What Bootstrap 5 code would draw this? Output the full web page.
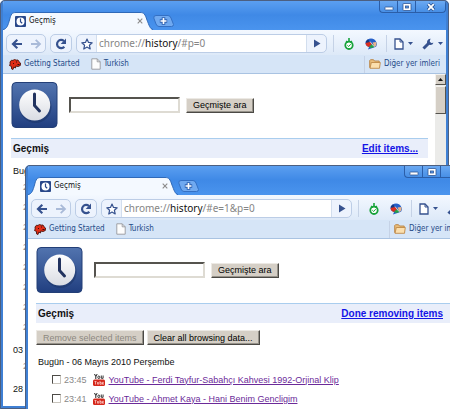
<!DOCTYPE html>
<html lang="tr">
<head>
<meta charset="utf-8">
<meta name="viewport" content="width=device-width, initial-scale=1">
<title>Geçmiş</title>
<link rel="stylesheet" href="https://cdn.jsdelivr.net/npm/bootstrap@5.3.0/dist/css/bootstrap.min.css">
<style>
body { font-family: "Liberation Sans", Arial, sans-serif; font-size: 9px; line-height: 12px; color: #111; background: #fff; }
button, input { font-family: inherit; }
.desktop { height: 100vh; }
.win { border: 3px solid #3f80d4; border-top-width: 0; outline: 1px solid #4c5f80; outline-offset: -1px; border-radius: 5px 5px 0 0; background: #fff; overflow: hidden; }
.win-back { inset: 0 1px 0 0; }
.win-front { top: 165px; left: 25px; width: calc(100% - 1px); height: 100%; }
.chrome-ui { font-family: "DejaVu Sans Condensed", "DejaVu Sans", sans-serif; font-size: 8px; line-height: 12px; }

.titlebar { height: 30px; background: linear-gradient(#5b9ff0, #3f89e6 14px, #4a94ee); border-top: 1px solid #4c5f80; }
.tab-item { width: 150px; height: 18px; }
.tab-shape { inset: 0; width: 100%; height: 100%; }
.tab-body { padding: 0 10px 0 12px; height: 18px; gap: 3px; color: #111; }
.tab-new { width: 21px; height: 12px; margin-bottom: 3px; }
.plain { border: 0; background: none; padding: 0; }
.caption { height: 12px; }
.caption button { width: 18px; border: 1px solid #2b5ea8; border-top: 0; border-right: 0; background: linear-gradient(#6ba9f2, #478fe6); padding: 0; }
.caption button:first-child { border-radius: 0 0 0 4px; }
.caption button:last-child { width: 31px; border-right: 1px solid #2b5ea8; border-radius: 0 0 4px 0; }

.toolbar { height: 25px; padding: 4px 3px 2px; background: linear-gradient(#f3f8ff, #dde9f8); }
.tool-group { border: 1px solid #bccde6; border-radius: 5px; background: #edf3fd; height: 19px; overflow: hidden; }
.tool-group button { width: 19px; }
.reload button { width: 20px; }
.omni { margin-left: 4px; }
.url { background: #fff; border-left: 1px solid #d2deee; border-right: 1px solid #d2deee; font-family: "Noto Sans", "Open Sans", sans-serif; font-size: 10px; line-height: 17px; color: #858585; padding-left: 2px; outline: 0; }
.url b { font-weight: 400; color: #111; }
.rule { width: 1px; height: 17px; background: #c5d2e6; }
.tools-rule { margin: 0 4px 0 6px; }
.ext { width: 22px; }
.drop { width: 24px; }

.bookmarks { height: 19px; padding: 0 6px; background: #d6e5f7; border-bottom: 1px solid #a9c3e2; }
.bookmarks a { color: #244a87; text-decoration: none; gap: 3px; }
.bm-second { margin-left: 11px; }

.page { padding: 8px 7px 0 8px; min-width: 0; }
.page-top { gap: 11px; }
.classic-input { width: 111px; height: 16px; border: 2px solid; border-color: #55534e #dedbd3 #dedbd3 #55534e; border-radius: 0; padding: 0 2px; background: #fff; font-size: 9px; }
.classic-btn { height: 15px; border: 1px solid; border-color: #ece9e4 #4b4945 #4b4945 #ece9e4; box-shadow: inset -1px -1px #96928a; background: #d5cfc6; color: #000; font-size: 9px; line-height: 12px; padding: 0 6px; white-space: nowrap; }
.classic-btn:disabled { color: #8d8981; }
.search { gap: 6px; }
.band { margin-top: 10px; height: 20px; background: #e9eefa; border-top: 1px solid #a9cdee; font-size: 10px; font-weight: 700; padding: 0 10px 0 2px; }
.band h1 { font-size: 10px; font-weight: 700; margin: 0; }
.band a { color: #1414e6; }
.day { font-size: 9px; line-height: 12px; margin: 0; padding-left: 2px; }
.back-day { padding-top: 7px; }
.back-list li { height: 20px; line-height: 20px; padding-left: 12px; }
.muted { color: #888; }
.entries { padding-top: 2px; }
.entries li { height: 19px; padding-left: 16px; gap: 3px; }
.entries svg { margin: 0 1px 0 3px; }
.entries a { color: #6b2a99; }
.entries input { appearance: none; width: 9px; height: 9px; margin: 0; border: 1px solid; border-color: #4d4b47 #c9c5bd #c9c5bd #4d4b47; background: #fff; }
.actions { gap: 3px; padding: 7px 0 11px; }

.scroller { width: 11px; background: #ebebe9; }
.scroller button { height: 11px; border: 1px solid; border-color: #f4f2ee #55534e #55534e #f4f2ee; background: #d5cfc6; padding: 0; }
.thumb { height: 28px; margin-top: 1px; border: 1px solid; border-color: #f4f2ee #55534e #55534e #f4f2ee; background: #d5cfc6; }
svg { display: block; flex: none; }
</style>
</head>
<body>
<svg width="0" height="0" class="position-absolute" aria-hidden="true">
  <defs>
    <linearGradient id="navy" x1="0" y1="0" x2="0" y2="1"><stop offset="0" stop-color="#5274af"/><stop offset="1" stop-color="#213f80"/></linearGradient>
    <linearGradient id="face" x1="0" y1="0" x2="0" y2="1"><stop offset="0" stop-color="#fff"/><stop offset="1" stop-color="#d9dce3"/></linearGradient>
  </defs>
  <symbol id="clock" viewBox="0 0 46 46"><rect x=".5" y=".5" width="45" height="45" rx="4" fill="url(#navy)" stroke="#233f77"/><circle cx="24" cy="25" r="16" fill="#1c3468" opacity=".55"/><circle cx="23.200" cy="23" r="15.500" fill="url(#face)"/><path d="M23 12v11.500l5 5.500" fill="none" stroke="#22335f" stroke-width="3" stroke-linecap="round" stroke-linejoin="round"/></symbol>
  <symbol id="clock-s" viewBox="0 0 11 11"><rect width="11" height="11" rx="1" fill="#29488a"/><circle cx="5.500" cy="5.500" r="4" fill="#fff"/><path d="M5.500 2.500v3.200l1.700 1.600" fill="none" stroke="#29488a" stroke-width="1.200"/></symbol>
  <symbol id="tab" viewBox="0 0 150 18"><path d="M0 18C4 17 5 13 6.500 8 8 2 9 .5 13 .5H137C141 .5 142 2 144 8 146 13 147 17 150 18Z" fill="#f4f9ff"/><path d="M0 17.500C4 17 5 13 6.500 8 8 2 9 .5 13 .5H137C141 .5 142 2 144 8 146 13 147 17 150 17.500" fill="none" stroke="#2f69b8"/></symbol>
  <symbol id="newtab" viewBox="0 0 21 12"><path d="M3 .5H15Q17 .5 18 3L20.500 9.500Q20.500 11.500 18.500 11.500H6Q4 11.500 3 9L.8 3Q.5 .5 3 .5Z" fill="#70a9f0" stroke="#3470c4"/><path d="M10.500 2.300v7.400M6.800 6h7.400" stroke="#2d5fae" stroke-width="3.600"/><path d="M10.500 3v6M7.500 6h6" stroke="#fff" stroke-width="1.700"/></symbol>
  <symbol id="x" viewBox="0 0 6 6"><path d="M.7.7l4.600 4.600M5.300.7L.7 5.300" stroke="#8b8b8b" stroke-width="1.100"/></symbol>
  <symbol id="min" viewBox="0 0 12 10"><rect x="2" y="5" width="8" height="3" rx=".5" fill="#fff" stroke="#2e5796" stroke-width=".8"/></symbol>
  <symbol id="max" viewBox="0 0 12 10"><rect x="2" y="1.500" width="8" height="7" rx=".5" fill="#fff" stroke="#2e5796" stroke-width=".8"/><rect x="4.500" y="4" width="3" height="2" fill="#5c9aec" stroke="#2e5796" stroke-width=".8"/></symbol>
  <symbol id="cls" viewBox="0 0 12 10"><path d="M3 2l6 6M9 2L3 8" stroke="#2e5796" stroke-width="3.400"/><path d="M3.200 2.200l5.600 5.600M8.800 2.200L3.200 7.800" stroke="#fff" stroke-width="1.800"/></symbol>
  <symbol id="back" viewBox="0 0 12 12"><path d="M11 6H2.500M6.300 1.800L2 6l4.300 4.200" fill="none" stroke="#36528f" stroke-width="2.200"/></symbol>
  <symbol id="fwd" viewBox="0 0 12 12"><path d="M1 6h8.500M5.700 1.800L10 6l-4.300 4.200" fill="none" stroke="#a9bad8" stroke-width="1.800"/></symbol>
  <symbol id="reload" viewBox="0 0 12 12"><path d="M9.300 8.700A4.100 4.100 0 1 1 8.900 3" fill="none" stroke="#36528f" stroke-width="2.200"/><path d="M11 .5V6H5.700Z" fill="#36528f"/></symbol>
  <symbol id="star" viewBox="0 0 12 12"><path d="M6 1l1.500 3.400 3.700.4-2.800 2.500.8 3.700L6 9.100 2.800 11l.8-3.700L.8 4.800l3.700-.4Z" fill="#fff" stroke="#36528f" stroke-width="1.200" stroke-linejoin="round"/></symbol>
  <symbol id="go" viewBox="0 0 8 9"><path d="M1 .5l6.500 4L1 8.500Z" fill="#36528f"/></symbol>
  <symbol id="timer" viewBox="0 0 12 12"><circle cx="6" cy="7.300" r="3.700" fill="#fff" stroke="#17a33a" stroke-width="1.800"/><path d="M6 0v4M3 3.200l2 1.200M9 3.200L7 4.400" stroke="#17a33a" stroke-width="1.600"/><path d="M4.300 7.200l1.400 1.300 2-2.300" fill="none" stroke="#17a33a"/></symbol>
  <symbol id="ball" viewBox="0 0 12 12"><path d="M.5 4Q2 .5 6 .5T11.500 4.500 9 9.500L3 11.500 4 9Q0 8 .5 4Z" fill="#245fc8"/><path d="M.8 3.500L3 1.200 5.500 4.500 2 6.500Z" fill="#17367c"/><path d="M.5 5L5 4l2.500 2L4 9Q1 8.500 .5 5Z" fill="#d92d20"/><path d="M4 9l3-3 2.500 2.500Q7 11 4 9Z" fill="#29a048"/><path d="M7.500 4.500l3.800-.5Q12 8 9.500 9Z" fill="#e8b48c"/><path d="M5 3.500l4 5" stroke="#fff" stroke-width=".7"/></symbol>
  <symbol id="sheet" viewBox="0 0 10 12"><path d="M1 1h5l3 3v7H1Z" fill="#fff" stroke="#36528f" stroke-width="1.300"/><path d="M6 1v3h3" fill="none" stroke="#36528f"/></symbol>
  <symbol id="wrench" viewBox="0 0 12 12"><path d="M1.500 10.500L7 5" stroke="#36528f" stroke-width="3"/><path d="M8.700.8A3.400 3.400 0 0 0 5 4.500 3.400 3.400 0 0 0 11.500 4.800L9.300 5 7.800 3.800 8 2Z" fill="#36528f"/></symbol>
  <symbol id="caret" viewBox="0 0 5 3"><path d="M0 0h5L2.500 3Z" fill="#36528f"/></symbol>
  <symbol id="dino" viewBox="0 0 12 11"><path d="M1 3L2.500 1.200 4 1.500 5.500.3 7 1.200 9 1 10 2.800 11.500 4 11.300 6.500 9 7.500 6.800 7 6.500 9 4.800 8 4 10.500 2.500 9.800 2.500 7.500.5 6.500 1.200 5Z" fill="#e02c16" stroke="#4b1109" stroke-width=".9"/><path d="M7 3h1M4 4l1 1M8.500 5.500h2" stroke="#3a0c07"/></symbol>
  <symbol id="doc" viewBox="0 0 10 12"><path d="M.8.8h5.400l3 3v7.400H.8Z" fill="#fdfdfd" stroke="#97999d" stroke-width=".9"/><path d="M6.200.8v3h3" fill="none" stroke="#97999d" stroke-width=".9"/></symbol>
  <symbol id="folder" viewBox="0 0 12 10"><path d="M.7 8.500V1.500L1.500.7h3l1 1.300h4.700v6.500Z" fill="#e9bd7c" stroke="#b9813f" stroke-width=".9"/><path d="M1 9.300L2.300 3.500h9L10.500 9.300Z" fill="#fbdfae" stroke="#c08a48" stroke-width=".9"/></symbol>
  <symbol id="tube" viewBox="0 0 12 12"><path d="M1.500 0l1.300 2.500V5M4.200 0L2.800 2.500" fill="none" stroke="#222"/><ellipse cx="5.800" cy="3.300" rx="1" ry="1.300" fill="none" stroke="#222" stroke-width=".9"/><path d="M8.300 1.500v2.800h1.800V1.500" fill="none" stroke="#222" stroke-width=".9"/><rect y="5.500" width="12" height="6.500" rx="1.500" fill="#d5281c"/><path d="M1.500 7.500h2M2.500 7.500v3M4.500 8v2.200h1.200V8M7 7v3.300h1.300V8.500H7M10.800 9.200H9.500V8.300h1.300M9.500 9v1.300h1.300" fill="none" stroke="#ffd9d4" stroke-width=".7"/></symbol>
</svg>

<main class="desktop position-relative overflow-hidden">

  <section class="win win-back position-absolute d-flex flex-column" aria-label="Geçmiş">
    <header class="chrome-ui">
      <div class="titlebar d-flex align-items-end">
        <div class="tab-item position-relative">
          <svg class="tab-shape position-absolute"><use href="#tab"/></svg>
          <div class="tab-body position-relative d-flex align-items-center">
            <svg width="11" height="11"><use href="#clock-s"/></svg><span>Geçmiş</span>
            <button class="plain ms-auto" aria-label="Kapat"><svg width="6" height="6"><use href="#x"/></svg></button>
          </div>
        </div>
        <button class="plain tab-new" aria-label="Yeni sekme"><svg width="21" height="12"><use href="#newtab"/></svg></button>
        <div class="caption d-flex ms-auto align-self-start">
          <button aria-label="Küçült"><svg class="mx-auto" width="12" height="10"><use href="#min"/></svg></button>
          <button aria-label="Büyüt"><svg class="mx-auto" width="12" height="10"><use href="#max"/></svg></button>
          <button aria-label="Kapat"><svg class="mx-auto" width="12" height="10"><use href="#cls"/></svg></button>
        </div>
      </div>
      <nav class="toolbar d-flex align-items-center">
        <div class="tool-group d-flex">
          <button class="plain" aria-label="Geri"><svg class="mx-auto" width="12" height="12"><use href="#back"/></svg></button>
          <button class="plain" aria-label="İleri"><svg class="mx-auto" width="12" height="12"><use href="#fwd"/></svg></button>
        </div>
        <div class="tool-group reload d-flex ms-1">
          <button class="plain" aria-label="Yenile"><svg class="mx-auto" width="12" height="12"><use href="#reload"/></svg></button>
        </div>
        <div class="tool-group omni d-flex flex-grow-1">
          <button class="plain" aria-label="Yer imi"><svg class="mx-auto" width="12" height="12"><use href="#star"/></svg></button>
          <div class="url flex-grow-1" role="textbox" contenteditable="true" aria-label="Adres" spellcheck="false">chrome://<b>history</b>/#p=0</div>
          <button class="plain" aria-label="Git"><svg class="mx-auto" width="8" height="9"><use href="#go"/></svg></button>
        </div>
        <span class="rule tools-rule"></span>
        <button class="plain ext" aria-label="Zamanlayıcı"><svg class="mx-auto" width="12" height="12"><use href="#timer"/></svg></button>
        <button class="plain ext" aria-label="Eklenti"><svg class="mx-auto" width="12" height="12"><use href="#ball"/></svg></button>
        <span class="rule mx-1"></span>
        <button class="plain drop d-flex align-items-center justify-content-center gap-1" aria-label="Sayfa"><svg width="10" height="12"><use href="#sheet"/></svg><svg width="5" height="3"><use href="#caret"/></svg></button>
        <button class="plain drop d-flex align-items-center justify-content-end gap-1 ms-1" aria-label="Araçlar"><svg width="12" height="12"><use href="#wrench"/></svg><svg width="5" height="3"><use href="#caret"/></svg></button>
      </nav>
      <nav class="bookmarks d-flex align-items-center">
        <a class="d-flex align-items-center" href="#"><svg width="12" height="11"><use href="#dino"/></svg>Getting Started</a>
        <a class="d-flex align-items-center bm-second" href="#"><svg width="10" height="12"><use href="#doc"/></svg>Turkish</a>
        <span class="rule ms-auto me-1"></span>
        <a class="d-flex align-items-center" href="#"><svg width="12" height="10"><use href="#folder"/></svg>Diğer yer imleri</a>
      </nav>
    </header>
    <div class="d-flex flex-grow-1 overflow-hidden">
      <div class="page flex-grow-1">
        <div class="page-top d-flex align-items-center">
          <svg width="47" height="46"><use href="#clock"/></svg>
          <form class="search d-flex align-items-center">
            <input class="classic-input" type="text" aria-label="Geçmişte ara">
            <button class="classic-btn" type="button">Geçmişte ara</button>
          </form>
        </div>
        <div class="band d-flex align-items-center justify-content-between"><h1>Geçmiş</h1><a href="#">Edit items...</a></div>
        <h2 class="day back-day">Bugün</h2>
        <ul class="back-list list-unstyled mb-0 muted">
          <li>23:45</li><li>23:41</li><li>2</li><li>2</li><li>2</li><li>2</li><li>2</li><li>2</li>
        </ul>
        <h2 class="day back-day">03</h2>
        <ul class="back-list list-unstyled mb-0 muted"><li>2</li></ul>
        <h2 class="day back-day">28</h2>
      </div>
      <div class="scroller d-flex flex-column">
        <button aria-label="Yukarı"><svg class="mx-auto" width="5" height="3" viewBox="0 0 5 3"><path d="M0 3h5L2.500 0Z" fill="#111"/></svg></button>
        <div class="thumb"></div>
      </div>
    </div>
  </section>

  <section class="win win-front position-absolute d-flex flex-column" aria-label="Geçmiş">
    <header class="chrome-ui">
      <div class="titlebar d-flex align-items-end">
        <div class="tab-item position-relative">
          <svg class="tab-shape position-absolute"><use href="#tab"/></svg>
          <div class="tab-body position-relative d-flex align-items-center">
            <svg width="11" height="11"><use href="#clock-s"/></svg><span>Geçmiş</span>
            <button class="plain ms-auto" aria-label="Kapat"><svg width="6" height="6"><use href="#x"/></svg></button>
          </div>
        </div>
        <button class="plain tab-new" aria-label="Yeni sekme"><svg width="21" height="12"><use href="#newtab"/></svg></button>
        <div class="caption d-flex ms-auto align-self-start">
          <button aria-label="Küçült"><svg class="mx-auto" width="12" height="10"><use href="#min"/></svg></button>
          <button aria-label="Büyüt"><svg class="mx-auto" width="12" height="10"><use href="#max"/></svg></button>
          <button aria-label="Kapat"><svg class="mx-auto" width="12" height="10"><use href="#cls"/></svg></button>
        </div>
      </div>
      <nav class="toolbar d-flex align-items-center">
        <div class="tool-group d-flex">
          <button class="plain" aria-label="Geri"><svg class="mx-auto" width="12" height="12"><use href="#back"/></svg></button>
          <button class="plain" aria-label="İleri"><svg class="mx-auto" width="12" height="12"><use href="#fwd"/></svg></button>
        </div>
        <div class="tool-group reload d-flex ms-1">
          <button class="plain" aria-label="Yenile"><svg class="mx-auto" width="12" height="12"><use href="#reload"/></svg></button>
        </div>
        <div class="tool-group omni d-flex flex-grow-1">
          <button class="plain" aria-label="Yer imi"><svg class="mx-auto" width="12" height="12"><use href="#star"/></svg></button>
          <div class="url flex-grow-1" role="textbox" contenteditable="true" aria-label="Adres" spellcheck="false">chrome://<b>history</b>/#e=1&amp;p=0</div>
          <button class="plain" aria-label="Git"><svg class="mx-auto" width="8" height="9"><use href="#go"/></svg></button>
        </div>
        <span class="rule tools-rule"></span>
        <button class="plain ext" aria-label="Zamanlayıcı"><svg class="mx-auto" width="12" height="12"><use href="#timer"/></svg></button>
        <button class="plain ext" aria-label="Eklenti"><svg class="mx-auto" width="12" height="12"><use href="#ball"/></svg></button>
        <span class="rule mx-1"></span>
        <button class="plain drop d-flex align-items-center justify-content-center gap-1" aria-label="Sayfa"><svg width="10" height="12"><use href="#sheet"/></svg><svg width="5" height="3"><use href="#caret"/></svg></button>
        <button class="plain drop d-flex align-items-center justify-content-end gap-1 ms-1" aria-label="Araçlar"><svg width="12" height="12"><use href="#wrench"/></svg><svg width="5" height="3"><use href="#caret"/></svg></button>
      </nav>
      <nav class="bookmarks d-flex align-items-center">
        <a class="d-flex align-items-center" href="#"><svg width="12" height="11"><use href="#dino"/></svg>Getting Started</a>
        <a class="d-flex align-items-center bm-second" href="#"><svg width="10" height="12"><use href="#doc"/></svg>Turkish</a>
        <span class="rule ms-auto me-1"></span>
        <a class="d-flex align-items-center" href="#"><svg width="12" height="10"><use href="#folder"/></svg>Diğer yer imleri</a>
      </nav>
    </header>
    <div class="d-flex flex-grow-1 overflow-hidden">
      <div class="page flex-grow-1">
        <div class="page-top d-flex align-items-center">
          <svg width="47" height="46"><use href="#clock"/></svg>
          <form class="search d-flex align-items-center">
            <input class="classic-input" type="text" aria-label="Geçmişte ara">
            <button class="classic-btn" type="button">Geçmişte ara</button>
          </form>
        </div>
        <div class="band d-flex align-items-center justify-content-between"><h1>Geçmiş</h1><a href="#">Done removing items</a></div>
        <div class="actions d-flex">
          <button class="classic-btn" type="button" disabled>Remove selected items</button>
          <button class="classic-btn" type="button">Clear all browsing data...</button>
        </div>
        <h2 class="day">Bugün - 06 Mayıs 2010 Perşembe</h2>
        <ul class="entries list-unstyled mb-0">
          <li class="d-flex align-items-center"><input type="checkbox" id="e1"><label class="muted" for="e1">23:45</label><svg width="12" height="12"><use href="#tube"/></svg><a href="#">YouTube - Ferdi Tayfur-Sabahçı Kahvesi 1992-Orjinal Klip</a></li>
          <li class="d-flex align-items-center"><input type="checkbox" id="e2"><label class="muted" for="e2">23:41</label><svg width="12" height="12"><use href="#tube"/></svg><a href="#">YouTube - Ahmet Kaya - Hani Benim Gencligim</a></li>
        </ul>
      </div>
      <div class="scroller d-flex flex-column"></div>
    </div>
  </section>
</main>
<script src="https://cdn.jsdelivr.net/npm/bootstrap@5.3.0/dist/js/bootstrap.bundle.min.js"></script>
</body>
</html>
